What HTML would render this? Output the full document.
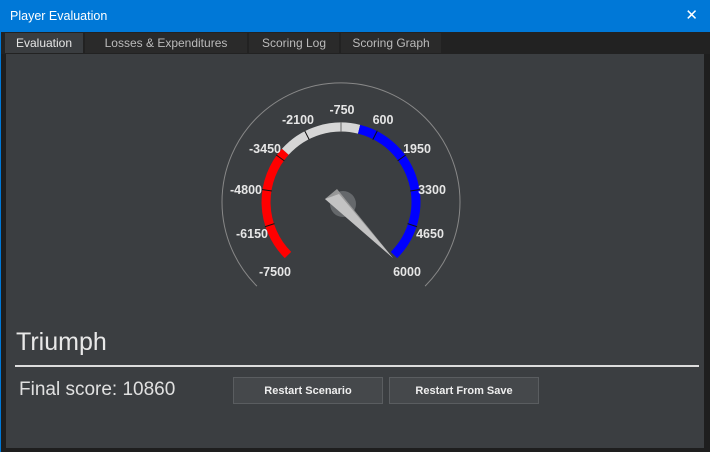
<!DOCTYPE html>
<html><head><style>
body{margin:0;width:710px;height:452px;background:#1e1e1e;font-family:"Liberation Sans",sans-serif;overflow:hidden;position:relative}
.title{position:absolute;left:0;top:0;width:710px;height:32px;background:#0078d7;color:#fff;font-size:12.5px;line-height:32px;text-indent:10px}
.x{position:absolute;right:12px;top:0;font-size:15px;color:#fff}
.lb{position:absolute;left:0;top:32px;width:1px;height:420px;background:#0078d7}
.tabs{position:absolute;left:1px;top:32px;width:709px;height:22px;background:#222}
.tab{position:absolute;top:1px;height:20px;line-height:20px;font-size:12px;color:#bbb;text-align:center;background:#2a2a2a}
.tab.a{background:#3a3d40;color:#e6e6e6}
.panel{position:absolute;left:6px;top:54px;width:698px;height:394px;background:#3b3e41}
.tr{position:absolute;left:16px;top:328px;font-size:25px;color:#e8e8e8}
.line{position:absolute;left:15px;top:365px;width:684px;height:2px;background:#ddd}
.fs{position:absolute;left:19px;top:379px;font-size:19px;color:#e0e0e0}
.btn{position:absolute;top:377px;height:27px;background:#45484b;border:1px solid #5a5d60;color:#eee;font-size:11px;font-weight:bold;text-align:center;line-height:27px;box-sizing:border-box}
svg{position:absolute;left:0;top:0}
</style></head><body>
<div class="title">Player Evaluation<span class="x">✕</span></div>
<div class="lb"></div>
<div class="tabs">
<div class="tab a" style="left:4px;width:78px">Evaluation</div>
<div class="tab" style="left:84px;width:162px">Losses &amp; Expenditures</div>
<div class="tab" style="left:248px;width:90px">Scoring Log</div>
<div class="tab" style="left:340px;width:100px">Scoring Graph</div>
</div>
<div class="panel"></div>
<svg width="710" height="452">
<path d="M256.9,286.1 A119,119 0 1 1 425.1,286.1" fill="none" stroke="#888" stroke-width="1"/>
<path d="M288,255 A75,75 0 0 1 285.3,151.8" fill="none" stroke="#f00" stroke-width="9"/>
<path d="M285.3,151.8 A75,75 0 0 1 359.1,129.2" fill="none" stroke="#d6d6d6" stroke-width="9"/>
<path d="M359.1,129.2 A75,75 0 0 1 394,255" fill="none" stroke="#00f" stroke-width="9"/>
<g stroke="#111" stroke-width="1">
<line x1="341" y1="122" x2="341" y2="132" transform="rotate(-108 341 202)"/>
<line x1="341" y1="122" x2="341" y2="132" transform="rotate(-81 341 202)"/>
<line x1="341" y1="122" x2="341" y2="132" transform="rotate(-54 341 202)"/>
<line x1="341" y1="122" x2="341" y2="132" transform="rotate(-27 341 202)"/>
<line x1="341" y1="122" x2="341" y2="132" transform="rotate(0 341 202)" stroke="#666"/>
<line x1="341" y1="122" x2="341" y2="132" transform="rotate(27 341 202)"/>
<line x1="341" y1="122" x2="341" y2="132" transform="rotate(54 341 202)"/>
<line x1="341" y1="122" x2="341" y2="132" transform="rotate(81 341 202)"/>
<line x1="341" y1="122" x2="341" y2="132" transform="rotate(108 341 202)"/>
</g>
<g fill="#e6e6e6" font-size="12.5" font-weight="bold" text-anchor="middle" font-family="Liberation Sans">
<text x="275" y="276">-7500</text>
<text x="252" y="238">-6150</text>
<text x="246" y="194">-4800</text>
<text x="265" y="153">-3450</text>
<text x="298" y="124">-2100</text>
<text x="342" y="114">-750</text>
<text x="383" y="124">600</text>
<text x="417" y="153">1950</text>
<text x="432" y="194">3300</text>
<text x="430" y="238">4650</text>
<text x="407" y="276">6000</text>
</g>
<circle cx="343" cy="204" r="13" fill="#65686b"/>
<polygon points="325,199 337,189 393,258" fill="#a0a0a0" opacity="0.9"/>
<polygon points="325,199 339,194 393,258" fill="#c8c8c8" opacity="0.9"/>
</svg>
<div class="tr">Triumph</div>
<div class="line"></div>
<div class="fs">Final score: 10860</div>
<div class="btn" style="left:233px;width:150px">Restart Scenario</div>
<div class="btn" style="left:389px;width:150px">Restart From Save</div>
</body></html>
